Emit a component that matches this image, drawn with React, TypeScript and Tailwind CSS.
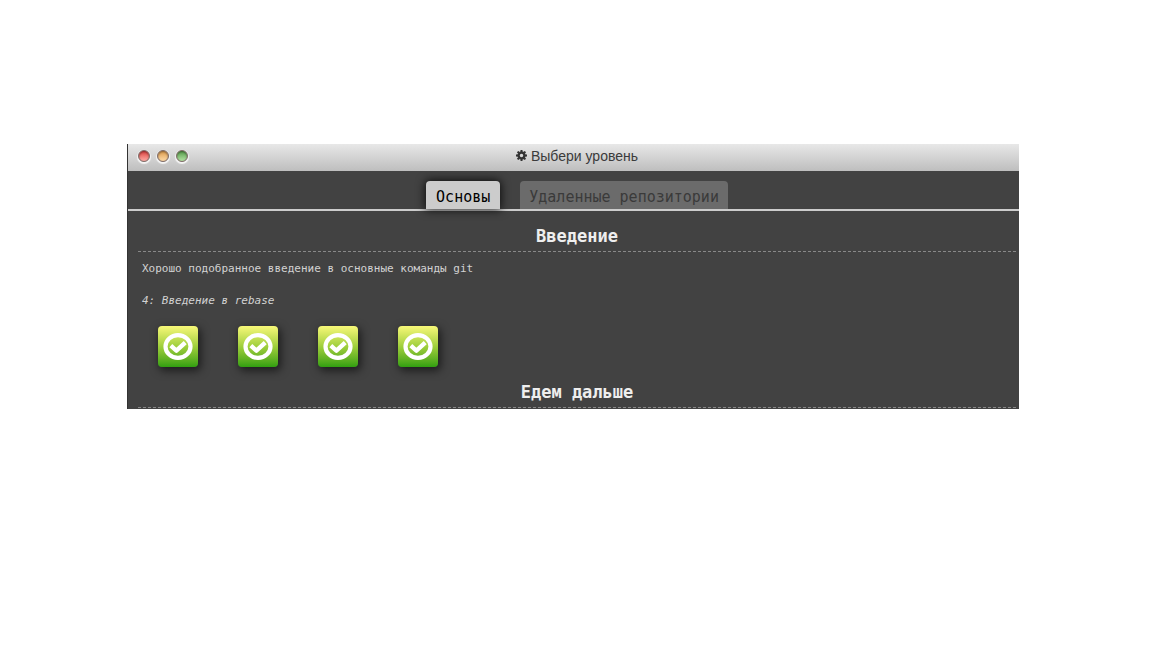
const lights = [
  { label: "Закрыть", fill: "bg-linear-to-b from-[#d8383c] to-[#ffaca6]" },
  { label: "Свернуть", fill: "bg-linear-to-b from-[#dc9a48] to-[#ffdca8]" },
  { label: "Развернуть", fill: "bg-linear-to-b from-[#559c48] to-[#b4e4a4]" },
];

const teeth = [0, 45, 90, 135, 180, 225, 270, 315];

function GearIcon() {
  return (
    <svg viewBox="0 0 22 22" className="size-[11px]" fill="#333" aria-hidden="true">
      <circle cx="11" cy="11" r="5.7" fill="none" stroke="#333" strokeWidth="4.4" />
      {teeth.map((angle) => (
        <path key={angle} d="M9.1 0 H12.9 L13.5 4.5 H8.5 Z" transform={`rotate(${angle} 11 11)`} />
      ))}
    </svg>
  );
}

function LevelIcon({ id }: { id: number }) {
  return (
    <button
      type="button"
      aria-label={`Уровень ${id}`}
      className="flex h-[41px] w-10 items-center justify-center rounded bg-linear-to-b from-[#f8f878] via-[#9fcf3c] to-[#2fa010] shadow-[2px_3px_8px_1px_rgba(0,0,0,0.55)]"
    >
      <svg viewBox="0 0 30 28" className="h-7 w-[30px]" fill="none" stroke="white" aria-hidden="true">
        <ellipse cx="15" cy="13.5" rx="12.5" ry="11.4" strokeWidth="4.2" />
        <path d="M7.8 12.6 L13.4 17.6 L22.2 9.6" strokeWidth="4.4" strokeLinejoin="round" />
      </svg>
    </button>
  );
}

function SectionTitle({ children }: { children: string }) {
  return (
    <h2 className="border-b border-dashed border-[#888] pt-0.5 pb-[3px] text-center text-[17px] leading-6 font-bold text-[#eee]">
      {children}
    </h2>
  );
}

export default function App() {
  return (
    <main className="min-h-screen bg-white pt-36 pr-[133px] pl-[127px]">
      <div className="border-l border-[#333] bg-[#424242] font-['DejaVu_Sans_Mono',monospace]">
        <header className="relative flex h-[27px] items-center justify-center bg-linear-to-b from-[#e8e8e8] to-[#bebebe] pb-1 pl-[7px]">
          <div className="absolute top-1.5 left-2.5 flex gap-[7px]">
            {lights.map((l) => (
              <button
                key={l.label}
                type="button"
                aria-label={l.label}
                className={`size-3 rounded-full border border-[#806c68] shadow-[0_1px_1px_1px_rgba(255,255,255,0.8),inset_0_1px_2px_rgba(0,0,0,0.4)] ${l.fill}`}
              />
            ))}
          </div>
          <h1 className="flex items-center gap-1 font-['Liberation_Sans',sans-serif] text-sm text-[#3b3b3b]">
            <GearIcon />
            Выбери уровень
          </h1>
        </header>
        <nav className="flex justify-center gap-5 border-b-2 border-[#ccc] pt-2.5 pl-[7px] text-[15px]">
          <button type="button" className="h-7 rounded-t bg-[#ccc] px-2.5 pt-1 text-black shadow-[0_0_10px_1px_rgba(0,0,0,0.8)]">
            Основы
          </button>
          <button type="button" className="h-7 rounded-t bg-[#6b6b6b] px-[9px] pt-1 text-[#3a3a3a]">
            Удаленные репозитории
          </button>
        </nav>
        <div className="pt-[11px] pr-[3px] pl-2.5">
          <section>
            <SectionTitle>Введение</SectionTitle>
            <div className="px-1 pt-[9px] text-[11px] leading-4 text-[#d2d2d2]">
              <p>Хорошо подобранное введение в основные команды git</p>
              <p className="mt-4 italic">4: Введение в rebase</p>
            </div>
            <div className="flex gap-10 px-5 pt-[17px] pb-[11px]">
              {[1, 2, 3, 4].map((id) => (
                <LevelIcon key={id} id={id} />
              ))}
            </div>
          </section>
          <section className="pb-px">
            <SectionTitle>Едем дальше</SectionTitle>
          </section>
        </div>
      </div>
    </main>
  );
}
